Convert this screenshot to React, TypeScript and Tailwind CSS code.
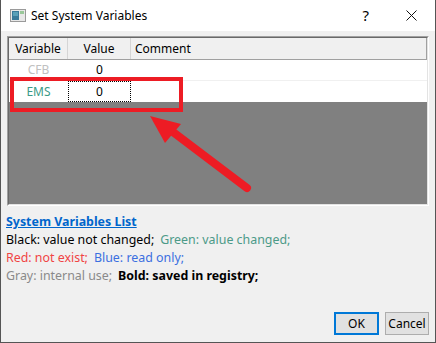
const ui = { fontFamily: '"Noto Sans", "Open Sans", sans-serif' };

function AppIcon() {
  return (
    <svg width="16" height="13" viewBox="0 0 16 13">
      <rect x="0.5" y="0.5" width="15" height="12" fill="#e8e8e8" stroke="#9a9a9a" />
      <rect x="2" y="2" width="7" height="9" fill="#3a7a9a" />
      <rect x="3" y="3" width="5" height="4" fill="#5aa0b8" />
      <rect x="10" y="2" width="4" height="3" fill="#9ac89a" />
    </svg>
  );
}

function TitleBar() {
  return (
    <div className="h-[31px] bg-white flex items-center pl-[9px] shrink-0">
      <AppIcon />
      <span className="ml-[5px] text-[12px] text-black">Set System Variables</span>
      <span className="ml-auto mr-[37px] text-[15px] text-black">?</span>
      <svg width="11" height="11" viewBox="0 0 11 11" className="mr-[18px]">
        <path d="M0.5 0.5 L10.5 10.5 M10.5 0.5 L0.5 10.5" stroke="#111" strokeWidth="1" />
      </svg>
    </div>
  );
}

function VariableTable() {
  return (
    <div className="mx-[6px] mt-[5px] h-[170px] border border-t-[#a0a0a0] border-l-[#a0a0a0] border-r-white border-b-white">
      <div className="h-full flex flex-col border border-t-[#696969] border-l-[#696969] border-r-[#e3e3e3] border-b-[#e3e3e3]">
        <div className="h-[22px] flex bg-[#f0f0f0] border-b border-[#a0a0a0] text-[12px] text-black shrink-0">
          <div className="w-[59px] flex items-center justify-center border-r border-[#d5d5d5]">Variable</div>
          <div className="w-[63px] flex items-center justify-center border-r border-[#d5d5d5]">Value</div>
          <div className="flex-1 flex items-center pl-[4px] border-r border-[#a0a0a0]">Comment</div>
        </div>
        <div className="h-[21px] flex bg-white border-b border-[#f0f0f0] text-[12px] shrink-0">
          <div className="w-[59px] flex items-center justify-center text-[#c0c0c0]">CFB</div>
          <div className="w-[63px] flex items-center justify-center text-black">0</div>
          <div className="flex-1" />
        </div>
        <div className="h-[21px] flex bg-white text-[12px] shrink-0">
          <div className="w-[59px] flex items-center justify-center text-[#3a9a86]">EMS</div>
          <div className="w-[63px] flex items-center justify-center text-black border border-dotted border-black">0</div>
          <div className="flex-1" />
        </div>
        <div className="flex-1 bg-[#808080]" />
      </div>
    </div>
  );
}

function Legend() {
  return (
    <div className="px-[5px] pt-[7px] text-[12.4px] leading-[18px]">
      <div className="font-bold underline text-[#0066cc]">System Variables List</div>
      <div>
        <span className="text-black">Black: value not changed;</span>
        <span className="ml-[6px] text-[#4c9a88]">Green: value changed;</span>
      </div>
      <div>
        <span className="text-[#f04444]">Red: not exist;</span>
        <span className="ml-[6px] text-[#3b6fe0]">Blue: read only;</span>
      </div>
      <div>
        <span className="text-[#8a8a8a]">Gray: internal use;</span>
        <span className="ml-[6px] font-bold text-black">Bold: saved in registry;</span>
      </div>
    </div>
  );
}

function Buttons() {
  return (
    <div className="mt-auto mb-[7px] flex justify-end gap-[6px] pr-[6px] text-[12px]">
      <button className="w-[45px] h-[23px] bg-[#e1e1e1] border-2 border-[#0078d7] text-black">OK</button>
      <button className="w-[44px] h-[23px] bg-[#e1e1e1] border border-[#adadad] text-black">Cancel</button>
    </div>
  );
}

function Annotation() {
  return (
    <svg className="absolute left-0 top-0 pointer-events-none" width="436" height="343">
      <rect x="11" y="79" width="169" height="31" fill="none" stroke="#ed1c24" strokeWidth="4" />
      <line x1="246" y1="188" x2="168" y2="129" stroke="#ed1c24" strokeWidth="8" strokeLinecap="round" />
      <polygon points="149,116 180,124 164,143" fill="#ed1c24" />
    </svg>
  );
}

export default function App() {
  return (
    <div style={ui} className="relative w-[436px] h-[343px] bg-[#f0f0f0] border-l border-r border-b border-[#555555] flex flex-col overflow-hidden">
      <TitleBar />
      <VariableTable />
      <Legend />
      <Buttons />
      <Annotation />
    </div>
  );
}
